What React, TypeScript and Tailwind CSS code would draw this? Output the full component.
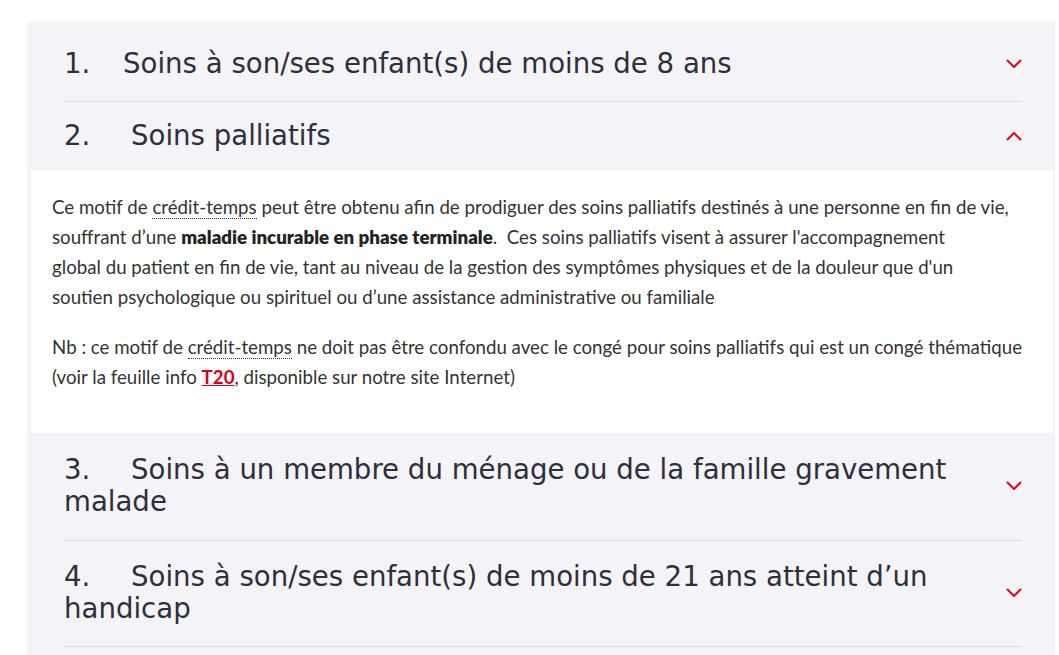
import React from "react";

const Chevron = ({ up }: { up?: boolean }) => (
  <svg width="16" height="10" viewBox="0 0 16 10" className="shrink-0">
    <polyline
      points={up ? "1.5,8.5 8,2 14.5,8.5" : "1.5,1.5 8,8 14.5,1.5"}
      fill="none"
      stroke="#e2051d"
      strokeWidth="2"
      strokeLinecap="round"
      strokeLinejoin="round"
    />
  </svg>
);

const heading = "font-['DejaVu_Sans',sans-serif] text-[27.6px] leading-[32px] text-[#2e2e3c] font-normal";

const Dotted = ({ children }: { children: React.ReactNode }) => (
  <span className="border-b border-dotted border-[#333]">{children}</span>
);

export default function App() {
  return (
    <div className="w-[1059px] h-[655px] bg-white overflow-hidden pt-[22px]">
      <div className="ml-[27px] w-[1028px] h-[640px] bg-[#f4f4f8]">
        {/* Item 1 */}
        <div className="mx-[37px] mr-[33px] flex items-center justify-between pt-[26px] pb-[21px] border-b border-[#d9d9de]">
          <div className={heading}>
            <span className="inline-block w-[59px]">1.</span>Soins à son/ses enfant(s) de moins de 8 ans
          </div>
          <Chevron />
        </div>
        {/* Item 2 */}
        <div className="mx-[37px] mr-[33px] flex items-center justify-between pt-[18px] pb-[19px]">
          <div className={heading}>
            <span className="inline-block w-[67px]">2.</span>Soins palliatifs
          </div>
          <Chevron up />
        </div>
        <div className="ml-[4px] mr-[2px] bg-white pt-[21px] pb-[21px] px-[21px] font-['Lato',sans-serif] text-[18.7px] leading-[30px] text-[#333]">
          <p className="mb-[20px] whitespace-nowrap">
            Ce motif de <Dotted>crédit-temps</Dotted> peut être obtenu afin de prodiguer des soins palliatifs destinés à une personne en fin de vie,
            <br />
            souffrant d’une <b className="font-extrabold text-[#222]">maladie incurable en phase terminale</b>.&nbsp; Ces soins palliatifs visent à assurer l'accompagnement
            <br />
            global du patient en fin de vie, tant au niveau de la gestion des symptômes physiques et de la douleur que d'un
            <br />
            soutien psychologique ou spirituel ou d’une assistance administrative ou familiale
          </p>
          <p className="mb-[20px] whitespace-nowrap">
            Nb : ce motif de <Dotted>crédit-temps</Dotted> ne doit pas être confondu avec le congé pour soins palliatifs qui est un congé thématique
            <br />
            (voir la feuille info <a className="font-bold text-[#d6001c] underline">T20</a>, disponible sur notre site Internet)
          </p>
        </div>
        {/* Item 3 */}
        <div className="mx-[37px] mr-[33px] flex items-center justify-between pt-[21px] pb-[22px] border-b border-[#d9d9de]">
          <div className={heading}>
            <span className="inline-block w-[67px]">3.</span>Soins à un membre du ménage ou de la famille gravement
            <br />
            malade
          </div>
          <Chevron />
        </div>
        {/* Item 4 */}
        <div className="mx-[37px] mr-[33px] flex items-center justify-between pt-[20px] pb-[21px] border-b border-[#d9d9de]">
          <div className={heading}>
            <span className="inline-block w-[67px]">4.</span>Soins à son/ses enfant(s) de moins de 21 ans atteint d’un
            <br />
            handicap
          </div>
          <Chevron />
        </div>
      </div>
    </div>
  );
}
